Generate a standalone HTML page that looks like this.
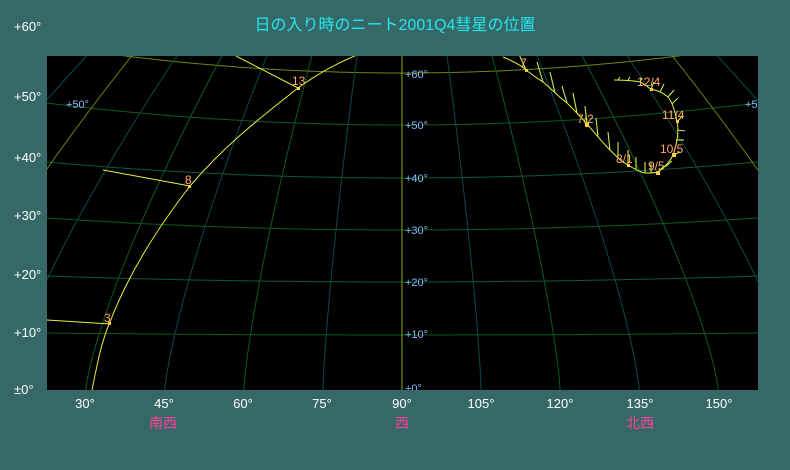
<!DOCTYPE html>
<html><head><meta charset="utf-8"><style>
html,body{margin:0;padding:0;}
body{width:790px;height:470px;background:#376868;overflow:hidden;}
svg{display:block}
text{font-family:"Liberation Sans","Noto Sans CJK JP",sans-serif;}
</style></head><body>
<svg id="s" width="790" height="470" viewBox="0 0 790 470" xmlns="http://www.w3.org/2000/svg">
<rect width="790" height="470" fill="#376868"/>
<text x="395" y="30" fill="#22e8ee" font-size="16" text-anchor="middle">日の入り時のニート2001Q4彗星の位置</text>
<g fill="#ffffff" font-size="13">
<text x="14" y="31">+60°</text><text x="14" y="101">+50°</text><text x="14" y="162">+40°</text>
<text x="14" y="220">+30°</text><text x="14" y="279">+20°</text><text x="14" y="337">+10°</text><text x="14" y="394">±0°</text>
</g>
<g fill="#ffffff" font-size="13" text-anchor="middle">
<text x="85" y="408">30°</text><text x="164" y="408">45°</text><text x="243" y="408">60°</text><text x="322" y="408">75°</text>
<text x="402" y="408">90°</text><text x="481" y="408">105°</text><text x="560" y="408">120°</text><text x="640" y="408">135°</text><text x="719" y="408">150°</text>
</g>
<g fill="#ff3f9a" font-size="14" text-anchor="middle">
<text x="163" y="428">南西</text><text x="402" y="428">西</text><text x="640" y="428">北西</text>
</g>
<svg x="47" y="56" width="711" height="334" viewBox="47 56 711 334" overflow="hidden">
<rect x="47" y="56" width="711" height="334" fill="#000"/>
<g id="grid" fill="none" stroke-width="1"></g>
<g fill="#88bbff" font-size="11">
<text x="405" y="78">+60°</text><text x="405" y="129">+50°</text><text x="405" y="182">+40°</text>
<text x="405" y="234">+30°</text><text x="405" y="286">+20°</text><text x="405" y="338">+10°</text><text x="405" y="392">+0°</text>
<text x="66" y="108">+50°</text><text x="745" y="108">+5</text>
</g>
<g fill="none" stroke="#e8f040" stroke-width="1">
<path d="M92,390 C98,360 102,340 110,322 C130,270 160,225 190,186 C225,145 260,118 298,88 C320,72 340,62 357,55"/>
<path d="M47,320 L110,324"/><path d="M103,170 L190,186"/><path d="M236,56 L298,88"/>
<path d="M503,57 C515,62 522,66 526,70 C535,77 540,80 543,82 C555,92 560,98 567,103 C577,113 582,118 587,124 C598,137 605,145 610,150 C618,158 622,162 628,165 C636,170 640,172 645,173 C650,173 655,173 658,172 C665,167 670,162 673,155 C678,140 679,130 677,122 C675,110 672,102 668,97 C662,92 656,90 651,89 C646,86 643,83 640,82 C630,80 622,80 614,80"/>
</g>
<g fill="none" stroke="#c8f040" stroke-width="1.1" id="ticks"></g>
<g fill="#ffcc44">
<rect x="108" y="322" width="3" height="3"/><rect x="188" y="185" width="3" height="3"/><rect x="297" y="87" width="3" height="3"/>
<rect x="525" y="69" width="3" height="3"/><rect x="585" y="123" width="4" height="4"/><rect x="627" y="164" width="3" height="3"/>
<rect x="656" y="171" width="4" height="4"/><rect x="672" y="153" width="4" height="4"/><rect x="676" y="120" width="3" height="3"/><rect x="650" y="88" width="3" height="3"/>
</g>
<g fill="#ffaa66" font-size="12">
<text x="104" y="322">3</text><text x="185" y="184">8</text><text x="292" y="85">13</text>
<text x="520" y="67">7</text><text x="577" y="123">7/2</text><text x="616" y="163">8/1</text><text x="648" y="170">9/5</text>
<text x="660" y="153">10/5</text><text x="662" y="119">11/4</text><text x="637" y="86">12/4</text>
</g>
</svg>
</svg>
<script>
(function(){
var ns="http://www.w3.org/2000/svg",g=document.getElementById("grid");
function add(d,c){var p=document.createElementNS(ns,"path");p.setAttribute("d",d);p.setAttribute("stroke",c);g.appendChild(p);}
var yc=[335,282,230,178,125,73],ye=[333,276,218,162,103,45];
for(var i=0;i<6;i++){var d="";for(var x=40;x<=770;x+=10){var u=(x-402)/355;var y=yc[i]-(yc[i]-ye[i])*u*u;d+=(x==40?"M":"L")+x+","+y.toFixed(1);}add(d,i==5?"#6a8a10":(i%2?"#0c5a3a":"#0d5a20"));}
for(var az=-60;az<=240;az+=15){var x0=402+(az-90)*5.27;var d="";for(var y=390;y>=40;y-=5){var t=(390-y)/334;var f=1-0.43*Math.pow(t,1.3);var x=402+(x0-402)*f;d+=(y==390?"M":"L")+x.toFixed(1)+","+y;}
var c=(az==90)?"#8ab020":((az==0||az==180)?"#6a8a10":(az%30?"#0c4a4a":"#0d5a20"));add(d,c);}
var tk=document.getElementById("ticks");
var T=[[526,70,518,52],[543,82,537,62],[555,93,550,72],[567,103,562,86],[577,113,573,93],[587,124,585,106],[598,137,596,118],[610,150,608,132],[618,158,618,142],[628,165,628,150],[636,170,636,157],[645,173,645,162],[651,173,651,163],[658,172,664,166],[665,167,672,161],[673,155,680,152],[676,140,684,140],[677,130,685,131],[677,122,683,115],[672,104,678,98],[668,97,674,90],[660,92,664,84],[651,89,654,82],[640,82,642,78],[628,80,630,77],[618,80,620,77]];
T.forEach(function(a){var p=document.createElementNS(ns,"path");p.setAttribute("d","M"+a[0]+","+a[1]+"L"+a[2]+","+a[3]);tk.appendChild(p);});
})();
</script>
</body></html>
